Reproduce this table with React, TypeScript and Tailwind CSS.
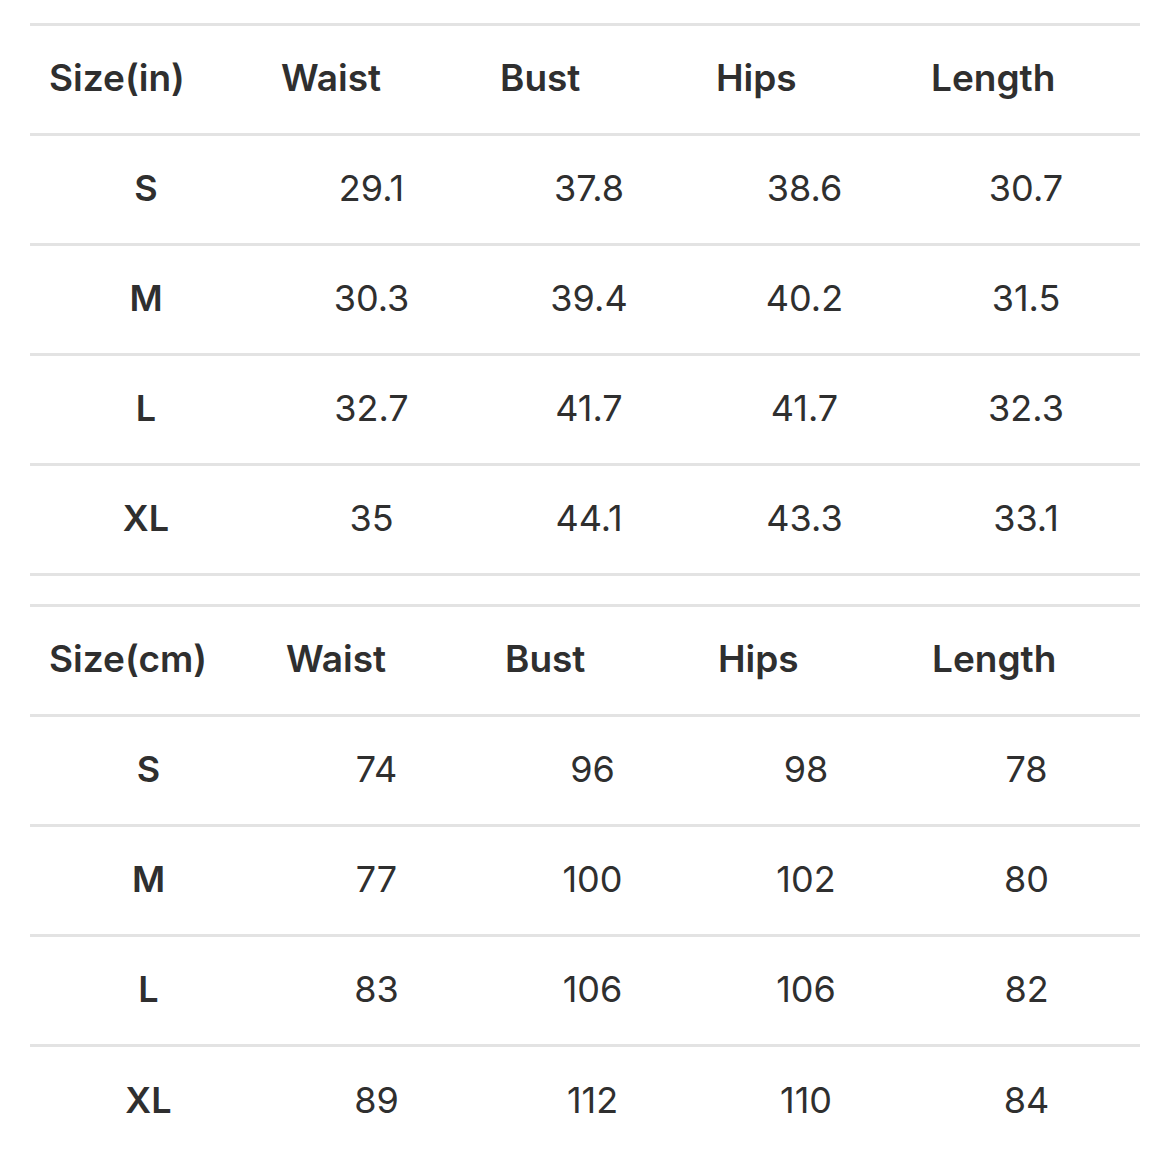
type SizeTable = {
  unit: string;
  cols: string;
  rows: [string, string, string, string, string][];
  lastBorder: boolean;
};

const tables: SizeTable[] = [
  {
    unit: "Size(in)",
    cols: "grid-cols-[232px_219px_216px_215px_228px]",
    rows: [
      ["S", "29.1", "37.8", "38.6", "30.7"],
      ["M", "30.3", "39.4", "40.2", "31.5"],
      ["L", "32.7", "41.7", "41.7", "32.3"],
      ["XL", "35", "44.1", "43.3", "33.1"],
    ],
    lastBorder: true,
  },
  {
    unit: "Size(cm)",
    cols: "grid-cols-[237px_219px_213px_214px_227px]",
    rows: [
      ["S", "74", "96", "98", "78"],
      ["M", "77", "100", "102", "80"],
      ["L", "83", "106", "106", "82"],
      ["XL", "89", "112", "110", "84"],
    ],
    lastBorder: false,
  },
];

const headers = ["Waist", "Bust", "Hips", "Length"];

function Table({ t }: { t: SizeTable }) {
  return (
    <div className="border-t-[3px] border-[#e3e3e3]">
      <div className={`grid ${t.cols} h-[110px] items-center pb-[4px] border-b-[3px] border-[#e3e3e3]`}>
        {[t.unit, ...headers].map((h) => (
          <div key={h} className="pl-[19px] text-[37px] font-semibold text-[#2f2f2f]">
            {h}
          </div>
        ))}
      </div>
      {t.rows.map((r, i) => {
        const last = i === t.rows.length - 1;
        return (
          <div
            key={r[0]}
            className={`grid ${t.cols} h-[110px] items-center pb-[4px] ${
              !last || t.lastBorder ? "border-b-[3px] border-[#e3e3e3]" : ""
            }`}
          >
            {r.map((c, j) => (
              <div
                key={j}
                className={`text-center text-[36px] text-[#2f2f2f] ${j === 0 ? "font-semibold" : "font-normal"}`}
              >
                {c}
              </div>
            ))}
          </div>
        );
      })}
    </div>
  );
}

export default function App() {
  return (
    <div className="w-[1170px] h-[1170px] overflow-hidden bg-white px-[30px] pt-[23px] font-['Inter','Liberation_Sans',sans-serif]">
      <div className="flex flex-col gap-[28px]">
        {tables.map((t) => (
          <Table key={t.unit} t={t} />
        ))}
      </div>
    </div>
  );
}
